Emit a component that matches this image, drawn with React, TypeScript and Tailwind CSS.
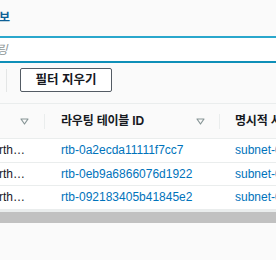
import React from "react";

function SortIcon() {
  return (
    <svg width="9" height="7" viewBox="0 0 9 7" fill="none" aria-hidden className="shrink-0">
      <path d="M1 1 H8 L4.5 6 Z" stroke="#879596" strokeWidth="1.2" strokeLinejoin="round" />
    </svg>
  );
}

const rows = [
  { name: "main-north…", rtb: "rtb-0a2ecda11111f7cc7", subnet: "subnet-0c4f1e9a2d7b35e18" },
  { name: "main-north…", rtb: "rtb-0eb9a6866076d1922", subnet: "subnet-09d3a7e1b5c2f4a60" },
  { name: "main-north…", rtb: "rtb-092183405b41845e2", subnet: "subnet-0f2b8c6d4e1a7391c" },
];

export default function App() {
  return (
    <div className="h-[260px] w-[276px] overflow-hidden bg-[#fafafa] font-['Liberation_Sans','Noto_Sans_CJK_KR',sans-serif] text-[12px] text-[#16191f]">
      <div className="-ml-[130px] w-[620px]">
        {/* heading */}
        <div className="flex h-[36px] items-center pb-px">
          <a className="ml-[118px] font-bold text-[#0e5f96]">정보</a>
        </div>

        {/* filter input */}
        <div className="h-[27px] border-y-2 border-t-[#2aa7cc] border-b-[#0f8fb8] bg-white">
          <input
            className="h-full w-full bg-transparent pl-[68px] italic text-[#16191f] outline-none placeholder:text-[#8d9596]"
            placeholder="테이블 필터링"
          />
        </div>

        {/* toolbar */}
        <div className="mt-[5px] flex h-[24px] items-center">
          <div className="ml-[136px] h-[23px] w-px bg-[#e4e6e6]" />
          <button className="ml-[13px] h-[24px] w-[92px] rounded-[2px] border border-[#545b64] bg-white text-[12.5px] font-bold text-[#16191f]">
            필터 지우기
          </button>
        </div>

        {/* table */}
        <div className="mt-[11px]">
          <div className="flex h-[35px] items-center border-t border-[#eaeded] text-[12px] font-bold text-[#16191f]">
            <div className="flex w-[175px] items-center pl-4">
              <span className="flex-1">이름</span>
              <SortIcon />
              <div className="ml-[15px] h-[15px] w-px bg-[#eaeded]" />
            </div>
            <div className="flex w-[175px] items-center pl-4">
              <span className="flex-1 tracking-[-0.2px]">라우팅 테이블 ID</span>
              <SortIcon />
              <div className="ml-[14px] h-[15px] w-px bg-[#eaeded]" />
            </div>
            <div className="flex flex-1 items-center pl-[15px]">
              <span className="tracking-[-0.2px]">명시적 서브넷 연결</span>
            </div>
          </div>

          {rows.map((r) => (
            <div key={r.rtb} className="flex h-[23.5px] items-center border-t border-[#eaeded] bg-white">
              <div className="w-[175px] overflow-hidden whitespace-nowrap pr-[20px] text-right">{r.name}</div>
              <div className="w-[175px] pl-4 text-[#0073bb]">{r.rtb}</div>
              <div className="flex-1 pl-[15px] text-[#0073bb]">{r.subnet}</div>
            </div>
          ))}
        </div>

        {/* horizontal scrollbar */}
        <div className="h-[3px] bg-[#eaeded]" />
        <div className="h-[11px] bg-[#c1c1c1]" />
      </div>
    </div>
  );
}
